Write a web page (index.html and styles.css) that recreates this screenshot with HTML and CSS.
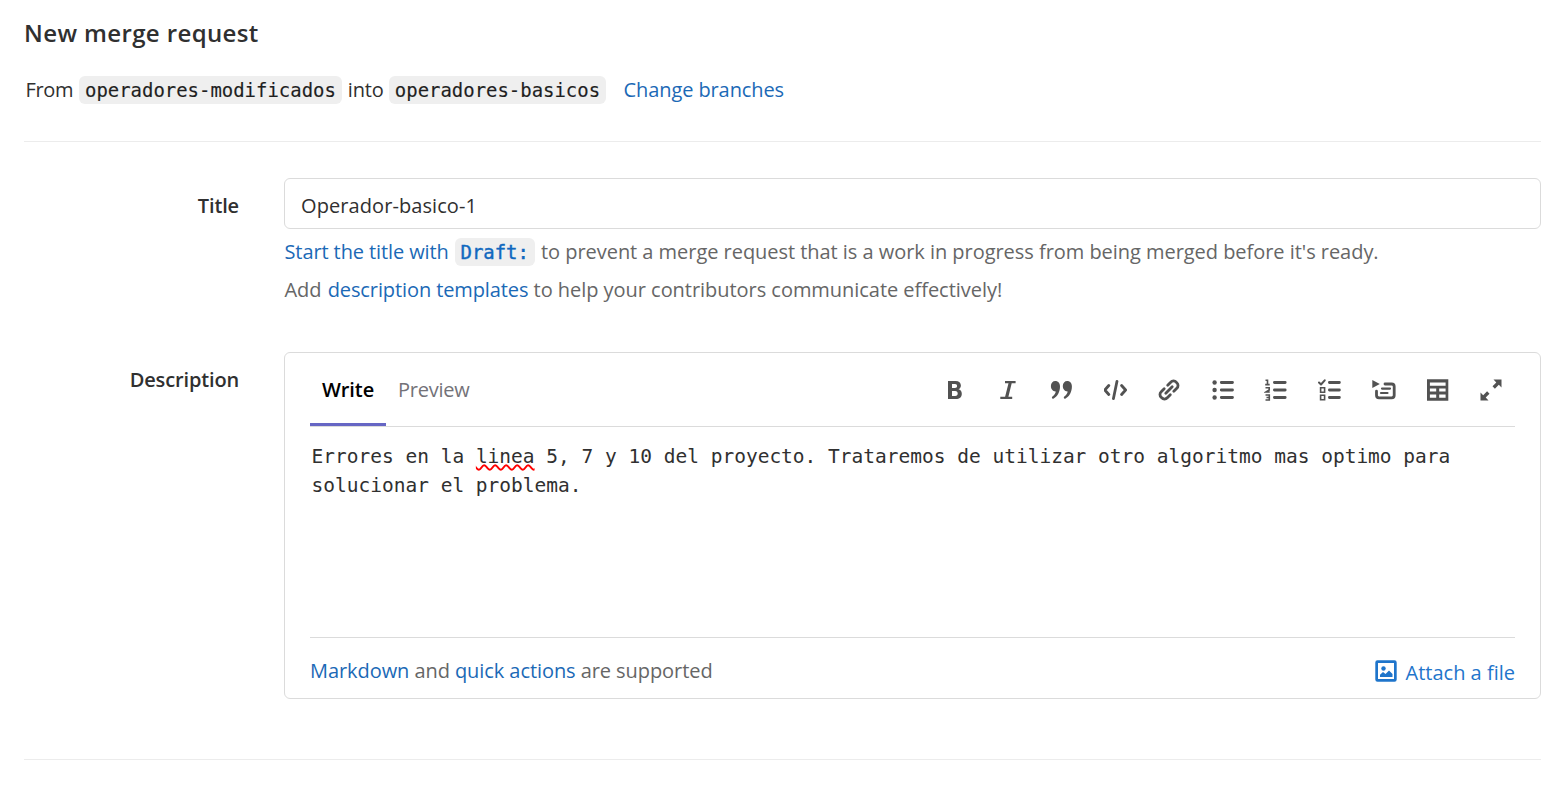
FILE: index.html
```html
<!DOCTYPE html>
<html lang="en">
<head>
<meta charset="utf-8">
<title>New merge request</title>
<link rel="stylesheet" href="styles.css">
</head>
<body>
<main class="page">
  <h1 class="heading">New merge request</h1>
  <p class="branches"><span class="from">From</span><code>operadores-modificados</code><span class="into">into</span><code>operadores-basicos</code><a class="change" href="#">Change branches</a></p>
  <form class="form">
    <div class="row row-title">
      <label class="label">Title</label>
      <div class="field">
        <div class="input">Operador-basico-1</div>
        <p class="hint"><a class="start" href="#">Start the title with</a><code class="draft">Draft:</code><span class="prevent">to prevent a merge request that is a work in progress from being merged before it's ready.</span></p>
        <p class="hint"><span class="templates">Add <a href="#">description templates</a> to help your contributors communicate effectively!</span></p>
      </div>
    </div>
    <div class="row">
      <label class="label">Description</label>
      <div class="editor">
        <div class="toolbar">
          <div class="tabs"><a class="tab active">Write</a><a class="tab">Preview</a></div>
          <div class="tools">
            <svg viewBox="0 0 24 24"><path fill-rule="evenodd" d="M5 3h7.500c3.600 0 5.400 1.800 5.400 4.500 0 1.800-.9 3.200-2.400 3.800 2 .5 3.300 2.100 3.300 4.400 0 3.300-2.300 5.300-6 5.300H5zM9 6v4h3c1.400 0 2.100-.8 2.100-2s-.7-2-2.100-2zM9 13v5h3.200c1.700 0 2.500-.9 2.500-2.500s-.8-2.500-2.500-2.500z"/></svg>
            <svg viewBox="0 0 24 24"><path d="M9 3h10.600v2.200h-3.900l-3.300 13.500h3.800V21H4.300v-2.300h4.800l3.400-13.500H9z"/></svg>
            <svg viewBox="1 0 24 24"><path d="M6.300 3c2.800 0 4.700 2.200 4.700 5.500 0 5.300-2.500 9.800-6.300 12-1.400.7-2.500-.8-1.300-1.900 1.900-1.600 3-3.300 3.400-5.200C4 13.600 1.900 11.200 1.900 8 1.900 5 3.800 3 6.300 3zM18.200 3c2.800 0 4.700 2.200 4.700 5.500 0 5.300-2.500 9.800-6.300 12-1.400.7-2.500-.8-1.300-1.900 1.900-1.600 3-3.300 3.400-5.200-2.800.2-4.900-2.200-4.900-5.400 0-3 1.900-5 4.400-5z"/></svg>
            <svg class="line" viewBox="1.900 0 24 24"><path d="M6.700 7.500 2.700 12l4 4.500M19.500 7.500l4 4.500-4 4.500M14.900 3.300l-3.600 17.400"/></svg>
            <svg class="line" viewBox="0 0 24 24"><path d="m8.800 15.200 6.400-6.400M10.700 7.200l3-3a3.800 3.800 0 0 1 5.600 0l.5.500a3.800 3.800 0 0 1 0 5.600l-3 3M7.200 10.700l-3 3a3.800 3.800 0 0 0 0 5.600l.5.500a3.800 3.800 0 0 0 5.600 0l3-3"/></svg>
            <svg class="line" viewBox="0 0 24 24"><path d="M10.300 4.500h11.200M10.300 12h11.200M10.300 19.500h11.200"/><g class="fill"><circle cx="3.600" cy="4.500" r="2.200"/><circle cx="3.600" cy="12" r="2.200"/><circle cx="3.600" cy="19.500" r="2.200"/></g></svg>
            <svg class="line" viewBox="0 0 24 24"><path d="M10.400 4.500h10.800M10.400 12h10.800M10.400 19.500h10.800"/><path class="thin" d="M1.500 2.300h2v4.300M1.200 6.600h4.500M1.500 9.800h3.700V12L1.800 14h4M1.500 17h3.800v5H1.500M2.500 19.500h2.800"/></svg>
            <svg class="line" viewBox="0 0 24 24"><path d="M11.400 4.500h10M11.400 12h10M11.400 19.500h10"/><path class="check" d="m1 4.500 2 2L6.700 2.300"/><path class="thin" d="M2.600 9.700h4v4.600h-4zM2.600 17.200h4v4.600h-4z"/></svg>
            <svg class="line" viewBox="0 0 24 24"><path class="fill" d="M.3 2 7.800 6 .3 10z"/><path d="M13 6h6.700q2.500 0 2.500 2.500v8.800q0 2.500-2.500 2.500H7q-2.500 0-2.500-2.500V13.200"/><path class="caption" d="M10 10.600h8M9 15h6.500"/></svg>
            <svg viewBox="-.7 0 24 24"><path fill-rule="evenodd" d="M1.300 1.300h21.300v21.500H1.300zM4.200 4.500v3.200h15.700V4.500zM4.200 10.500v3h6.300v-3zM13.500 10.500v3h6.400v-3zM4.200 16.400v3.400h6.300v-3.400zM13.500 16.400v3.400h6.400v-3.400z"/></svg>
            <svg viewBox="0 0 24 24"><path d="M14.500 1.500h8v8l-2.700-2.700-3.900 3.900-2.400-2.400 3.800-3.900zM9.500 22.500h-8v-8l2.700 2.700 3.900-3.900 2.400 2.400-3.800 3.900z"/></svg>
          </div>
        </div>
        <div class="textarea">Errores en la <span class="misspelled">linea</span> 5, 7 y 10 del proyecto. Trataremos de utilizar otro algoritmo mas optimo para<br>solucionar el problema.</div>
        <div class="footer">
          <p class="support"><a href="#">Markdown</a> and <a href="#">quick actions</a> are supported</p>
          <a class="attach" href="#"><svg viewBox="0 0 24 24"><path fill-rule="evenodd" d="M3.500 1.300h17q2.200 0 2.200 2.200v17q0 2.200-2.200 2.200h-17q-2.200 0-2.200-2.200v-17q0-2.200 2.200-2.200zM4 4v16h16V4z"/><circle cx="9.500" cy="9.500" r="2.200"/><path d="M6 18v-2.300l3-2.700 2.500 2 3.500-3.500 3.500 3.500v3z"/></svg><span>Attach a file</span></a>
        </div>
      </div>
    </div>
  </form>
</main>
</body>
</html>
```
FILE: styles.css
```css
* { box-sizing: border-box; }
body { margin: 0; background: #fff; color: #303030; font: 20px/30px "Open Sans", "Noto Sans", sans-serif; }
h1, p { margin: 0; }
a { color: #1b69b6; text-decoration: none; }
.page { padding: 0 8px 0 24px; }
.heading { height: 75px; padding-top: 18px; font-size: 24px; line-height: 30px; font-weight: 550; letter-spacing: .38px; }
.branches { display: flex; height: 67px; padding-left: 1.5px; border-bottom: 1px solid #ececec; }
code { height: 28px; margin-top: 1px; padding: 0 6px; border-radius: 6px; background: #efefef; color: #1f1f1f; font: 18.95px/29px "DejaVu Sans Mono", monospace; -webkit-text-stroke: .15px currentColor; }
.from { width: 53.5px; letter-spacing: -.35px; }
.into { width: 47px; padding-left: 6px; letter-spacing: -.2px; }
.change { margin-left: 17.5px; letter-spacing: -.1px; }
.form { height: 618px; padding-top: 36px; border-bottom: 1px solid #ececec; }
.row { display: grid; grid-template-columns: 215px 1257px; column-gap: 45px; }
.row:first-child { height: 174px; }
.label { padding-top: 13px; text-align: right; font-weight: 550; letter-spacing: -.15px; }
.input { height: 51px; padding: 12px 16px 0; border: 1px solid #dbdbdb; border-radius: 6px; letter-spacing: .08px; }
.hint { display: flex; height: 38px; padding: 8px 0 0 .5px; color: #666; }
.start { width: 170.5px; letter-spacing: -.1px; }
.draft { width: 80px; padding: 0 5.5px; margin: 1px 6px 0 0; color: #1068bf; -webkit-text-stroke-width: .4px; }
.prevent { letter-spacing: -.04px; }
.templates { letter-spacing: -.04px; }
.templates a { margin-left: 1px; letter-spacing: -.1px; }
.editor { height: 347px; padding: 0 25px; border: 1px solid #dbdbdb; border-radius: 6px; }
.toolbar { display: flex; justify-content: space-between; height: 74px; border-bottom: 1px solid #dbdbdb; }
.tabs { display: flex; }
.tab { height: 73px; padding: 22px 12px 0; color: #737278; letter-spacing: -.25px; }
.active { width: 76px; color: #000; font-weight: 550; letter-spacing: -.1px; border-bottom: 3px solid #6666c4; }
.tools { display: flex; gap: 29.65px; padding: 25px 12px 0 0; }
svg { display: block; width: 24px; height: 24px; fill: #525252; }
.line { fill: none; stroke: #525252; stroke-width: 2.8px; stroke-linecap: round; stroke-linejoin: round; }
.line .fill { fill: #525252; stroke: none; }
.line .thin { stroke-width: 1.6px; stroke-linecap: butt; stroke-linejoin: miter; }
.line .check { stroke-width: 2px; }
.line .caption { stroke-width: 2.2px; }
.textarea { height: 211px; padding: 15px 1.5px; border-bottom: 1px solid #dbdbdb; font: 19.5px/29px "DejaVu Sans Mono", monospace; white-space: nowrap; }
.misspelled { text-decoration: underline wavy #f00 1.5px; text-underline-offset: 1px; text-decoration-skip-ink: none; }
.footer { display: flex; justify-content: space-between; padding-top: 18px; color: #666; }
.support { letter-spacing: -.07px; }
.attach { display: flex; gap: 8px; padding-top: 2px; color: #1f75cb; }
.attach svg { margin-top: 1px; fill: #1f75cb; }
```
